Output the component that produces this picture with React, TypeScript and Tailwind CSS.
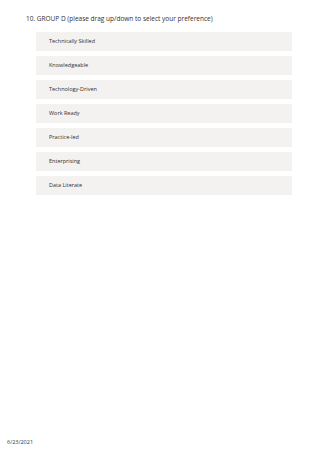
const options = [
  "Technically Skilled",
  "Knowledgeable",
  "Technology-Driven",
  "Work Ready",
  "Practice-led",
  "Enterprising",
  "Data Literate",
];

export default function App() {
  return (
    <div
      className="relative w-[320px] h-[454px] bg-white text-[#323130]"
      style={{ fontFamily: '"Open Sans", "Noto Sans", sans-serif' }}
    >
      <div className="pt-[14px] pl-[26px] text-[6.5px] leading-[10px]">
        10. GROUP D (please drag up/down to select your preference)
      </div>
      <div className="mt-[8px] ml-[36px] w-[256px] flex flex-col gap-[5px]">
        {options.map((o) => (
          <div
            key={o}
            className="h-[19px] bg-[#f3f2f1] flex items-center pl-[13px] text-[5.5px]"
          >
            {o}
          </div>
        ))}
      </div>
      <div className="absolute left-[7px] top-[437px] text-[5.5px] leading-[10px]">
        6/23/2021
      </div>
    </div>
  );
}
